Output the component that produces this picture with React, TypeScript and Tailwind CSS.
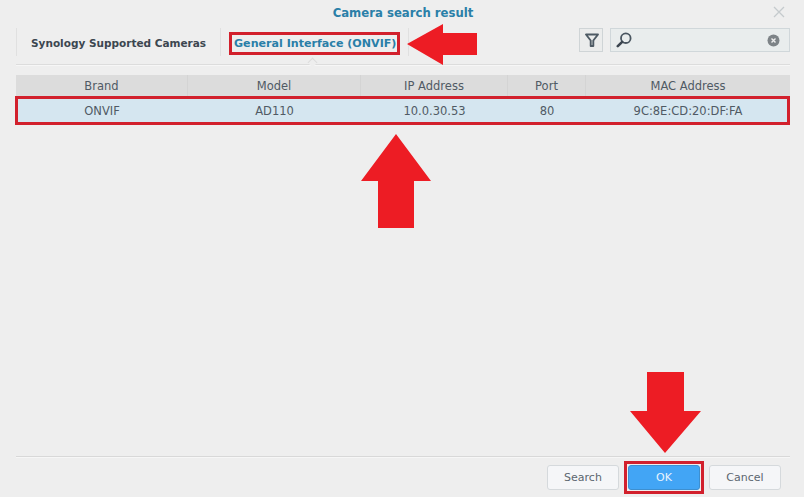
import React from "react";

const cols = [
  { w: "w-[172px]", h: "Brand", v: "ONVIF" },
  { w: "w-[173px]", h: "Model", v: "AD110" },
  { w: "w-[147px]", h: "IP Address", v: "10.0.30.53" },
  { w: "w-[78px]", h: "Port", v: "80" },
  { w: "w-[204px]", h: "MAC Address", v: "9C:8E:CD:20:DF:FA" },
];

function Arrow({ points }: { points: string }) {
  return (
    <svg className="absolute left-0 top-0" viewBox="0 0 804 497" width={804} height={497}>
      <polygon points={points} fill="#ed1c24" />
    </svg>
  );
}

export default function App() {
  return (
    <div className="relative w-[804px] h-[497px] overflow-hidden bg-[#eeeeee] text-[#505a64] font-['DejaVu_Sans',sans-serif] text-[11px]">
      {/* Title bar */}
      <div className="relative h-[28px] pt-[6px] text-center text-[11.7px] leading-[14px] font-bold text-[#2a7fa8]">
        <span className="ml-[2px]">Camera search result</span>
        <svg className="absolute left-[773px] top-[6px]" width="12" height="12" viewBox="0 0 12 12">
          <path d="M1 1 L11 11 M11 1 L1 11" stroke="#c5cacd" strokeWidth="1.3" fill="none" />
        </svg>
      </div>

      {/* Tabs and toolbar */}
      <div className="mx-4 w-[774px] h-[37px] flex border-b border-[#dcdcdc] shadow-[0_1px_0_#f6f6f6]">
        <div className="h-[28px] w-[204px] pl-[14px] pt-[4px] flex items-center border-l border-[#e0e0e0] font-bold text-[10.5px] text-[#3c4650]">
          Synology Supported Cameras
        </div>
        <div className="relative h-[28px] w-[188px] pl-[13px] pt-[4px] flex items-center border-l border-[#e0e0e0] font-bold text-[11.1px] text-[#2a7fa8]">
          General Interface (ONVIF)
          <div className="absolute left-[8px] top-[4px] w-[171px] h-[23px] border-[3px] border-[#d2202c]" />
          <div className="absolute left-[88px] top-[31px] w-[7px] h-[7px] rotate-45 border-l border-t border-[#dcdcdc] bg-[#eeeeee]" />
        </div>
        <div className="h-[28px] border-l border-[#e0e0e0]" />
        <div className="ml-auto flex gap-[7px]">
          <div className="w-[24px] h-[24px] pl-[1px] border border-[#cfd4d6] bg-[#ebecec] flex items-center justify-center">
            <svg width="16" height="16" viewBox="0 0 16 16">
              <path d="M2 2.5 H14 L9.3 8.5 V14 H6.7 V8.5 Z" fill="none" stroke="#4e5a64" strokeWidth="1.9" strokeLinejoin="round" />
            </svg>
          </div>
          <div className="w-[180px] h-[24px] border border-[#d0d7da] bg-[#e9eded] flex items-center justify-between pl-[5px] pr-[9px]">
            <svg width="16" height="16" viewBox="0 0 16 16">
              <circle cx="9.8" cy="6.2" r="4.8" fill="none" stroke="#4a5660" strokeWidth="1.8" />
              <path d="M6.2 9.8 L1.8 14.2" stroke="#3c4650" strokeWidth="2.6" strokeLinecap="round" />
            </svg>
            <svg width="13" height="13" viewBox="0 0 13 13">
              <circle cx="6.5" cy="6.5" r="6" fill="#7d8387" />
              <path d="M4.5 4.5 L8.5 8.5 M8.5 4.5 L4.5 8.5" stroke="#eeeeee" strokeWidth="1.4" />
            </svg>
          </div>
        </div>
      </div>

      {/* Table */}
      <div className="mx-4 mt-[10px] w-[774px]">
        <div className="flex h-[22px] bg-[#dcdcdc]">
          {cols.map((c) => (
            <div key={c.h} className={`${c.w} pt-[2px] flex items-center justify-center border-r border-[#d4d4d4] last:border-r-0 text-[11.5px] text-[#505a64]`}>
              {c.h}
            </div>
          ))}
        </div>
        <div className="relative flex h-[26px] bg-[#d5e6f0]">
          {cols.map((c) => (
            <div key={c.h} className={`${c.w} pt-[4px] flex items-center justify-center text-[11.5px] text-[#505a64]`}>
              {c.v}
            </div>
          ))}
          <div className="absolute -left-[1px] -top-[1px] w-[775px] h-[29px] border-[3px] border-[#d2202c]" />
        </div>
      </div>

      {/* Footer */}
      <div className="absolute left-4 top-[456px] w-[774px] h-[41px] border-t border-[#d8d8d8] shadow-[inset_0_1px_0_#f6f6f6]">
        <div className="flex pt-2 pl-[531px] gap-[9px]">
          <div className="w-[72px] h-[25px] pt-[2px] rounded-[3px] border border-[#d5d9dc] bg-[#f5f6f8] flex items-center justify-center text-[#5c6670]">Search</div>
          <div className="relative w-[72px] h-[25px] pt-[2px] rounded-[3px] border border-[#3d8fd0] bg-[#42a5f5] flex items-center justify-center text-[#e8f4fd]">
            OK
            <div className="absolute -left-[5px] -top-[5px] w-[80px] h-[33px] border-[3px] border-[#d2202c]" />
          </div>
          <div className="w-[72px] h-[25px] pt-[2px] rounded-[3px] border border-[#d5d9dc] bg-[#f5f6f8] flex items-center justify-center text-[#5c6670]">Cancel</div>
        </div>
      </div>

      {/* Annotation arrows */}
      <Arrow points="407,44 443,24 443,33 477,33 477,55 443,55 443,65" />
      <Arrow points="396,134 431,181 414,181 414,228 378,228 378,181 361,181" />
      <Arrow points="647,372 684,372 684,411 701,411 665,453 630,411 647,411" />
    </div>
  );
}
